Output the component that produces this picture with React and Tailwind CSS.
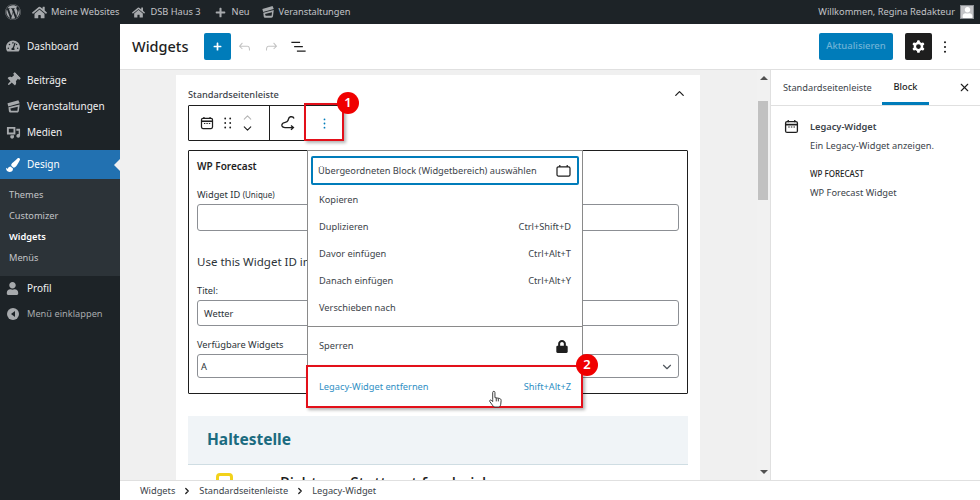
import React from 'react';
import { ChevronDown, ChevronRight, ChevronUp, X } from 'lucide-react';
import { FaWordpress, FaThumbtack, FaTachometerAlt, FaPaintBrush, FaUser, FaHome, FaLock, FaPlus } from 'react-icons/fa';

const Calendar = ({ className }) => (
  <svg viewBox="0 0 16 16" className={className} fill="none" stroke="currentColor" strokeWidth="1.4">
    <rect x="1.7" y="2.7" width="12.6" height="11.6" rx="1.6" />
    <path d="M2 6h12" strokeWidth="1.8" />
    <path d="M4.5 1v2.5M11.5 1v2.5" />
    <path d="M4.5 8.6h1.6M7.3 8.6h1.6M10.1 8.6h1.6" strokeWidth="1.1" />
  </svg>
);

const EventsIcon = ({ className }) => (
  <svg viewBox="0 0 16 16" className={className} fill="currentColor">
    <path d="M1.6 4.6 13.2 1.2l1.4 3.4L2.4 8 1.6 4.6z" />
    <path d="M2.6 8.8l12-3-.9 7c-.1.9-.8 1.7-1.8 1.7H5c-1 0-1.7-.6-1.9-1.5L2.6 8.8z" />
    <path d="M4.6 10.2l8-2-.5 4.2H5.3l-.7-2.2z" fill="#1d2327" />
  </svg>
);

const MediaIcon = ({ className }) => (
  <svg viewBox="0 0 16 16" className={className} fill="currentColor">
    <path d="M1 2h9v8H1V2zm2 2v4h5V4H3z" />
    <path d="M11 4h4v7.5a2 2 0 1 1-1.5-1.9V6H11V4z" />
    <path d="M5 11h3.5v1.5a2 2 0 1 1-3.5-1.3V11z" />
  </svg>
);

const Undo = ({ className }) => (
  <svg viewBox="0 0 24 24" className={className} fill="currentColor">
    <path d="M18.3 11.7c-.6-.6-1.4-.9-2.3-.9H6.7l2.9-3.3-1.1-1-4.5 5L8.5 16l1-1-2.7-2.7H16c.5 0 .9.2 1.3.5 1 1 1 3.4 1 4.5v.3h1.5v-.2c0-1.5 0-4.3-1.5-5.7z" />
  </svg>
);

const Cog = ({ className }) => (
  <svg viewBox="0 0 24 24" className={className} fill="currentColor">
    <path fillRule="evenodd" clipRule="evenodd" d="M10.289 4.836A1 1 0 0111.275 4h1.306a1 1 0 01.987.836l.244 1.466c.787.26 1.503.679 2.108 1.218l1.393-.522a1 1 0 011.216.437l.653 1.13a1 1 0 01-.23 1.273l-1.148.944a6.025 6.025 0 010 2.435l1.149.946a1 1 0 01.23 1.272l-.653 1.13a1 1 0 01-1.216.437l-1.394-.522c-.605.54-1.32.958-2.108 1.218l-.244 1.466a1 1 0 01-.987.836h-1.306a1 1 0 01-.986-.836l-.244-1.466a5.995 5.995 0 01-2.108-1.218l-1.394.522a1 1 0 01-1.217-.436l-.653-1.131a1 1 0 01.23-1.272l1.149-.946a6.026 6.026 0 010-2.435l-1.148-.944a1 1 0 01-.23-1.272l.653-1.131a1 1 0 011.217-.437l1.393.522a5.994 5.994 0 012.108-1.218l.244-1.466zM14.929 12a3 3 0 11-6 0 3 3 0 016 0z" />
  </svg>
);

const Dots = ({ className }) => (
  <svg viewBox="0 0 4 16" className={className} fill="currentColor">
    <circle cx="2" cy="2.5" r="1.2" />
    <circle cx="2" cy="8" r="1.2" />
    <circle cx="2" cy="13.5" r="1.2" />
  </svg>
);

const Topbar = () => (
  <div className="flex h-6 shrink-0 items-center bg-[#1d2327] text-[9.25px] text-[#c3c4c7]">
    <FaWordpress className="ml-[5px] h-4 w-4 text-[#a7aaad]" />
    <FaHome className="ml-[11px] h-[15px] w-[15px] text-[#a7aaad]" />
    <span className="ml-[4px]">Meine Websites</span>
    <FaHome className="ml-[13px] h-[13px] w-[13px] text-[#a7aaad]" />
    <span className="ml-[5px]">DSB Haus 3</span>
    <FaPlus className="ml-[14px] h-[11px] w-[11px] text-[#a7aaad]" />
    <span className="ml-[6px]">Neu</span>
    <EventsIcon className="ml-[11px] h-[14px] w-[14px] text-[#a7aaad]" />
    <span className="ml-[4px]">Veranstaltungen</span>
    <span className="ml-auto">Willkommen, Regina Redakteur</span>
    <div className="mr-[6px] ml-[5px] flex h-[14px] w-[14px] items-end justify-center overflow-hidden border border-[#8c8f94] bg-[#c3c4c7]">
      <FaUser className="h-[11px] w-[11px] text-white" />
    </div>
  </div>
);

const NavItem = ({ icon, label, className = '' }) => (
  <div className={`flex items-center pl-[6px] text-[10px] text-[#f0f0f1] ${className}`}>
    <span className="flex w-[21px] justify-start text-[#a7aaad]">{icon}</span>
    <span>{label}</span>
  </div>
);

const Sidebar = () => (
  <div className="flex w-[120px] shrink-0 flex-col bg-[#1d2327]">
    <NavItem className="mt-[10px] h-[24px]" icon={<FaTachometerAlt className="h-[14px] w-[14px]" />} label="Dashboard" />
    <NavItem className="mt-[10px] h-[24px]" icon={<FaThumbtack className="h-[14px] w-[14px] rotate-45" />} label="Beiträge" />
    <NavItem className="mt-[1px] h-[26px]" icon={<EventsIcon className="h-[15px] w-[15px]" />} label="Veranstaltungen" />
    <NavItem className="h-[26px]" icon={<MediaIcon className="h-[15px] w-[15px]" />} label="Medien" />
    <div className="relative mt-[5px] flex h-[29px] items-center bg-[#2271b1] pl-[6px] text-[10px] text-white">
      <span className="flex w-[21px] justify-start"><FaPaintBrush className="h-[14px] w-[14px]" /></span>
      <span>Design</span>
      <div className="absolute top-[9px] right-0 h-0 w-0 border-y-[6px] border-r-[6px] border-y-transparent border-r-[#f0f0f1]" />
    </div>
    <div className="flex h-[97px] flex-col bg-[#2c3338] pt-[5px] pl-[9px] text-[9.25px] leading-[21px] text-[#c3c4c7]">
      <span>Themes</span>
      <span>Customizer</span>
      <span className="font-semibold text-white">Widgets</span>
      <span>Menüs</span>
    </div>
    <NavItem className="h-[24px]" icon={<FaUser className="h-[13px] w-[13px]" />} label="Profil" />
    <div className="mt-[1px] flex h-[26px] items-center pl-[7px] text-[9.25px] text-[#a7aaad]">
      <span className="flex w-[20px] justify-start">
        <span className="flex h-[12px] w-[12px] items-center justify-center rounded-full bg-[#a7aaad]">
          <span className="h-0 w-0 border-y-[3px] border-r-[4px] border-y-transparent border-r-[#1d2327]" />
        </span>
      </span>
      <span>Menü einklappen</span>
    </div>
  </div>
);

const Header = () => (
  <div className="flex h-[46px] shrink-0 items-center border-b border-[#e0e0e0] bg-white pl-[12px] text-[#1e1e1e]">
    <span className="w-[60px] text-[14.5px] leading-none font-medium">Widgets</span>
    <button className="ml-[12px] flex h-[27px] w-[27px] items-center justify-center rounded-[2px] bg-[#007cba] text-white">
      <FaPlus className="h-[9px] w-[9px]" />
    </button>
    <Undo className="ml-[5px] h-[17px] w-[17px] text-[#c4c4c4]" />
    <Undo className="ml-[10px] h-[17px] w-[17px] -scale-x-100 text-[#c4c4c4]" />
    <svg viewBox="0 0 24 24" className="ml-[9px] h-[19px] w-[19px] text-[#1e1e1e]" fill="currentColor">
      <path d="M3 6h11v1.5H3V6zm3.5 5.5h11V13h-11v-1.5zM21 17H10v1.5h11V17z" />
    </svg>
    <button className="ml-auto flex h-[27px] w-[74px] items-center justify-center rounded-[2px] bg-[#007cba] text-[9.5px] font-medium text-[#6fb3d6]">
      Aktualisieren
    </button>
    <button className="ml-[12px] flex h-[27px] w-[27px] items-center justify-center rounded-[2px] bg-[#1e1e1e] text-white">
      <Cog className="h-[19px] w-[19px]" />
    </button>
    <Dots className="mr-[33px] ml-[11px] h-[14px] w-[4px] text-[#1e1e1e]" />
  </div>
);

const Label = ({ children, className = '' }) => (
  <div className={`text-[9.25px] leading-[14px] text-[#2c3338] ${className}`}>{children}</div>
);

const MenuItem = ({ label, shortcut }) => (
  <div className="flex h-[27px] shrink-0 items-center justify-between px-[8px] text-[#3c434a]">
    <span>{label}</span>
    {shortcut && <span>{shortcut}</span>}
  </div>
);

const BlockMenu = () => (
  <div className="absolute top-[-1px] left-[118px] z-10 flex h-[257px] w-[276px] flex-col border border-[#8a8a8a] bg-white px-[3px] pt-[5px] text-[9.25px]">
    <div className="mb-[1px] flex h-[29px] shrink-0 items-center justify-between rounded-[2px] border-2 border-[#007cba] pr-[6px] pl-[5px] text-[#3c434a]">
      <span>Übergeordneten Block (Widgetbereich) auswählen</span>
      <svg viewBox="0 0 16 14" className="h-[13px] w-[15px] text-[#1e1e1e]" fill="none" stroke="currentColor" strokeWidth="1.3">
        <rect x="1" y="3" width="14" height="10" rx="1.5" />
        <path d="M4 1.2v2M12 1.2v2" />
      </svg>
    </div>
    <MenuItem label="Kopieren" />
    <MenuItem label="Duplizieren" shortcut="Ctrl+Shift+D" />
    <MenuItem label="Davor einfügen" shortcut="Ctrl+Alt+T" />
    <MenuItem label="Danach einfügen" shortcut="Ctrl+Alt+Y" />
    <MenuItem label="Verschieben nach" />
    <div className="-mx-[3px] mt-[5px] border-t border-[#8a8a8a]" />
    <div className="flex h-[38px] shrink-0 items-center justify-between px-[8px] text-[#3c434a]">
      <span>Sperren</span>
      <FaLock className="mr-[3px] h-[13px] w-[12px] text-[#1e1e1e]" />
    </div>
    <div className="-mx-[3px] border-t border-[#8a8a8a]" />
    <div className="flex h-[41px] shrink-0 items-center justify-between px-[8px] text-[#2f8fc4]">
      <span>Legacy-Widget entfernen</span>
      <span>Shift+Alt+Z</span>
    </div>
  </div>
);

const WidgetBox = () => (
  <div className="relative mt-[9px] h-[244px] w-[500px] rounded-[1px] border border-[#1e1e1e] bg-white px-[8px] pt-[7px]">
    <div className="text-[10px] leading-[16px] font-semibold text-[#1e1e1e]">WP Forecast</div>
    <Label className="mt-[14px]">
      Widget ID <span className="text-[8px]">(Unique)</span>
    </Label>
    <div className="mt-[2px] h-[27px] w-[482px] rounded-[3px] border border-[#8c8f94]" />
    <div className="mt-[22px] text-[11.5px] leading-[18px] text-[#2c3338]">Use this Widget ID in</div>
    <Label className="mt-[13px]">Titel:</Label>
    <div className="mt-[2px] flex h-[26px] w-[482px] items-center rounded-[3px] border border-[#8c8f94] px-[6px] pt-[2px] text-[9.25px] text-[#2c3338]">Wetter</div>
    <Label className="mt-[12px]">Verfügbare Widgets</Label>
    <div className="mt-[2px] flex h-[24px] w-[482px] items-center justify-between rounded-[3px] border border-[#8c8f94] pt-[1px] pr-[4px] pl-[3px] text-[9.25px] text-[#2c3338]">
      <span>A</span>
      <ChevronDown className="h-[14px] w-[14px] text-[#50575e]" />
    </div>
    <BlockMenu />
  </div>
);

const BlockToolbar = () => (
  <div className="relative flex h-[36px] w-[156px] items-center rounded-[1px] border border-[#1e1e1e] bg-white text-[#1e1e1e]">
    <div className="flex h-full w-[81px] items-center border-r border-[#1e1e1e] pl-[11px]">
      <Calendar className="h-[14px] w-[14px]" />
      <svg viewBox="0 0 8 12" className="ml-[10px] h-[12px] w-[8px]" fill="currentColor">
        <circle cx="1.2" cy="1.5" r="0.9" /><circle cx="6.2" cy="1.5" r="0.9" />
        <circle cx="1.2" cy="6" r="0.9" /><circle cx="6.2" cy="6" r="0.9" />
        <circle cx="1.2" cy="10.5" r="0.9" /><circle cx="6.2" cy="10.5" r="0.9" />
      </svg>
      <div className="ml-[9px] flex flex-col items-center">
        <ChevronUp className="-mb-[2px] h-[13px] w-[13px] text-[#b5b5b5]" />
        <ChevronDown className="h-[13px] w-[13px]" />
      </div>
    </div>
    <svg viewBox="0 0 16 16" className="ml-[10px] h-[16px] w-[16px]" fill="none" stroke="currentColor" strokeWidth="1.4">
      <path d="M14 3.5C13.5 2 12 1.5 10.5 1.8 8.5 2.2 8.5 4 8 5.5 7.5 7 6 7.3 4.5 7.6 2.5 8 1.5 9.5 2 11c.5 1.300 1.800 1.600 3 1.600h8" />
      <path d="M11 10.400l2.400 2.200L11 14.800" />
    </svg>
    <Dots className="ml-[27px] h-[13px] w-[3px] text-[#007cba]" />
  </div>
);

const Annotation = ({ n, className }) => (
  <div className={`absolute z-20 flex h-[22px] w-[22px] items-center justify-center rounded-full bg-[#f00000] text-[13px] font-semibold text-white ${className}`}>
    {n}
  </div>
);

const Card = () => (
  <div className="relative ml-[56px] h-[500px] w-[524px] bg-white px-[12px] pt-[10px]">
    <div className="flex h-[20px] items-center justify-between">
      <span className="text-[9.25px] font-medium text-[#3c434a]">Standardseitenleiste</span>
      <ChevronUp className="mr-[1px] mb-[3px] h-[15px] w-[15px] text-[#1e1e1e]" />
    </div>
    <BlockToolbar />
    <WidgetBox />
    <div className="mt-[22px] flex h-[49px] w-[500px] items-center border-b border-[#cfdde3] bg-[#f0f4f7] pl-[19px] text-[15.5px] font-bold text-[#1b6b80]">
      Haltestelle
    </div>
    <div className="mt-[8px] flex w-[500px] items-start pl-[28px]">
      <div className="h-[22px] w-[17px] rounded-[4px] border-[3px] border-[#f2d21b]" />
      <span className="ml-[47px] text-[15.5px] leading-[20px] font-medium text-[#1e1e1e]">Richtung Stuttgart frenbeich</span>
    </div>
    {/* red callouts */}
    <div className="absolute top-[28px] left-[128px] z-20 h-[38px] w-[40px] border-2 border-[#e3101a] shadow-[2px_2px_3px_rgba(0,0,0,0.3)]" />
    <Annotation n="1" className="top-[17px] left-[161px]" />
    <div className="absolute top-[290px] left-[130px] z-20 h-[43px] w-[277px] border-2 border-[#e3101a] shadow-[2px_2px_3px_rgba(0,0,0,0.3)]" />
    <Annotation n="2" className="top-[279px] left-[400px]" />
    <svg viewBox="0 0 16 20" className="absolute top-[315px] left-[312px] z-20 h-[19px] w-[15px]" fill="white" stroke="#333" strokeWidth="1">
      <path d="M5 10V2.5a1.2 1.2 0 0 1 2.4 0V8l4.6.8c1.3.3 2 1 2 2.2l-.4 4c-.2 1.6-1 3-2.6 3H7.5c-1 0-1.7-.4-2.3-1.3L1.8 12c-.5-1 .8-2 1.7-1.2L5 12.3V10z" />
      <path d="M8.8 8.500V12M11 9v3" />
    </svg>
  </div>
);

const Scrollbar = () => (
  <div className="relative flex w-[13px] shrink-0 flex-col items-center justify-between bg-[#f1f1f1] py-[6px]">
    <div className="h-0 w-0 border-x-[4px] border-b-[4px] border-x-transparent border-b-[#505050]" />
    <div className="absolute top-[31px] left-[1px] h-[99px] w-[10px] bg-[#c1c1c1]" />
    <div className="h-0 w-0 border-x-[4px] border-t-[4px] border-x-transparent border-t-[#505050]" />
  </div>
);

const SidePanel = () => (
  <div className="flex w-[210px] shrink-0 flex-col border-l border-[#e0e0e0] bg-white text-[9.25px] text-[#3c434a]">
    <div className="flex h-[36px] shrink-0 items-center border-b border-[#e0e0e0] pl-[12px]">
      <span className="w-[87px]">Standardseitenleiste</span>
      <div className="ml-[12px] flex h-full w-[47px] items-center justify-center border-b-[3px] border-[#007cba] pt-[2px] font-medium text-[#1e1e1e]">Block</div>
      <X className="ml-[29px] h-[13px] w-[13px] text-[#1e1e1e]" />
    </div>
    <div className="flex pt-[13px] pl-[13px]">
      <Calendar className="h-[15px] w-[15px] text-[#1e1e1e]" />
      <div className="ml-[11px]">
        <div className="leading-[16px] font-semibold text-[#3c434a]">Legacy-Widget</div>
        <div className="mt-[3px] leading-[16px]">Ein Legacy-Widget anzeigen.</div>
        <div className="mt-[14px] text-[8px] leading-[12px] font-medium text-[#1e1e1e] uppercase">WP Forecast</div>
        <div className="mt-[5px] leading-[16px]">WP Forecast Widget</div>
      </div>
    </div>
  </div>
);

const Breadcrumb = () => (
  <div className="relative flex h-[20px] shrink-0 items-center border-t border-[#e0e0e0] bg-white pl-[20px] text-[9.25px] text-[#3c434a]">
    <span>Widgets</span>
    <ChevronRight className="mx-[7px] h-[10px] w-[10px] text-[#1e1e1e]" strokeWidth={3} />
    <span>Standardseitenleiste</span>
    <ChevronRight className="mx-[7px] h-[10px] w-[10px] text-[#1e1e1e]" strokeWidth={3} />
    <span>Legacy-Widget</span>
  </div>
);

export default function App() {
  return (
    <div className="flex h-[500px] w-[980px] flex-col overflow-hidden font-['Noto_Sans',sans-serif]">
      <Topbar />
      <div className="flex min-h-0 flex-1">
        <Sidebar />
        <div className="flex min-w-0 flex-1 flex-col">
          <Header />
          <div className="relative flex min-h-0 flex-1 overflow-hidden bg-[#f0f0f0] pt-[5px]">
            <div className="flex-1 overflow-hidden">
              <Card />
            </div>
            <div className="-mt-[5px] flex">
              <Scrollbar />
              <SidePanel />
            </div>
          </div>
          <Breadcrumb />
        </div>
      </div>
    </div>
  );
}
